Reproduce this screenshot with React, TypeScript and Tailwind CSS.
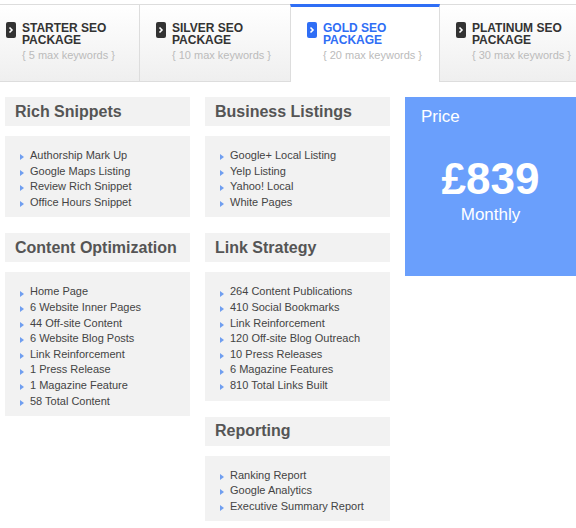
const tabs = [
  { title: ["STARTER SEO", "PACKAGE"], sub: "{ 5 max keywords }", w: "w-[140px]", pl: "pl-[6px]" },
  { title: ["SILVER SEO", "PACKAGE"], sub: "{ 10 max keywords }", w: "w-[150px]", pl: "pl-[16px]" },
  { title: ["GOLD SEO", "PACKAGE"], sub: "{ 20 max keywords }", w: "w-[150px]", pl: "pl-[16px]", active: true },
  { title: ["PLATINUM SEO", "PACKAGE"], sub: "{ 30 max keywords }", w: "flex-1", pl: "pl-[16px]" },
];

const col1 = [
  { title: "Rich Snippets", items: ["Authorship Mark Up", "Google Maps Listing", "Review Rich Snippet", "Office Hours Snippet"] },
  {
    title: "Content Optimization",
    items: [
      "Home Page",
      "6 Website Inner Pages",
      "44 Off-site Content",
      "6 Website Blog Posts",
      "Link Reinforcement",
      "1 Press Release",
      "1 Magazine Feature",
      "58 Total Content",
    ],
  },
];

const col2 = [
  { title: "Business Listings", items: ["Google+ Local Listing", "Yelp Listing", "Yahoo! Local", "White Pages"] },
  {
    title: "Link Strategy",
    items: [
      "264 Content Publications",
      "410 Social Bookmarks",
      "Link Reinforcement",
      "120 Off-site Blog Outreach",
      "10 Press Releases",
      "6 Magazine Features",
      "810 Total Links Built",
    ],
  },
  { title: "Reporting", items: ["Ranking Report", "Google Analytics", "Executive Summary Report"] },
];

function Chevron({ active }: { active?: boolean }) {
  return (
    <div
      className={`flex h-[16px] w-[10px] shrink-0 items-center justify-center rounded-[2px] ${
        active ? "bg-[#2f6ef5]" : "bg-[#333]"
      }`}
    >
      <svg width="6" height="8" viewBox="0 0 6 8">
        <path d="M1.5 1.5 L4 4 L1.5 6.5" stroke="#fff" strokeWidth="1.6" fill="none" />
      </svg>
    </div>
  );
}

function Section({ title, items }: { title: string; items: string[] }) {
  return (
    <div className="mb-[16px]">
      <div className="flex h-[29px] items-center whitespace-nowrap bg-[#f2f2f2] px-[10px] text-[16px] font-bold text-[#555]">
        {title}
      </div>
      <ul className="mt-[10px] bg-[#f2f2f2] pl-[15px] pt-[12px] pb-[7px]">
        {items.map((it) => (
          <li key={it} className="flex items-center text-[11px] leading-[15.6px] text-[#444]">
            <span className="mr-[6px] mt-[3px] h-0 w-0 border-y-[3px] border-l-[4px] border-y-transparent border-l-[#6f9ef0]" />
            {it}
          </li>
        ))}
      </ul>
    </div>
  );
}

export default function App() {
  return (
    <div className="h-[528px] w-[576px] overflow-hidden bg-white pt-[4px] font-['Liberation_Sans',Arial,sans-serif]">
      {/* TABS */}
      <div className="flex h-[78px] border-t border-[#ddd]">
        {tabs.map((t, i) => (
          <div
            key={i}
            className={`${t.w} ${t.pl} ${
              t.active
                ? "-mt-px border-l border-r border-t-[3px] border-[#ddd] border-t-[#2f6ef5] bg-white pt-[15px]"
                : "border-b border-[#ddd] bg-gradient-to-b from-white to-[#efefef] pt-[17px]"
            } ${i === 0 ? "border-r border-r-[#ddd]" : ""}`}
          >
            <div className="flex gap-[6px]">
              <Chevron active={t.active} />
              <div>
                <div
                  className={`text-[12px] font-bold leading-[12px] ${
                    t.active ? "text-[#2f6ef5]" : "text-[#333]"
                  }`}
                >
                  {t.title[0]}
                  <br />
                  {t.title[1]}
                </div>
                <div className="mt-[3px] text-[11px] leading-[13px] text-[#bbb]">{t.sub}</div>
              </div>
            </div>
          </div>
        ))}
      </div>

      {/* CONTENT */}
      <div className="mt-[15px] flex gap-[15px] pl-[5px]">
        <div className="w-[185px]">
          {col1.map((s) => (
            <Section key={s.title} {...s} />
          ))}
        </div>
        <div className="w-[185px]">
          {col2.map((s) => (
            <Section key={s.title} {...s} />
          ))}
        </div>
        <div className="h-[179px] flex-1 bg-[#6a9ffc] text-white">
          <div className="pl-[16px] pt-[10px] text-[17px] leading-[20px]">Price</div>
          <div className="mt-[27px] text-center text-[44px] font-bold leading-[50px]">£839</div>
          <div className="mt-px text-center text-[17px] leading-[20px]">Monthly</div>
        </div>
      </div>
    </div>
  );
}
